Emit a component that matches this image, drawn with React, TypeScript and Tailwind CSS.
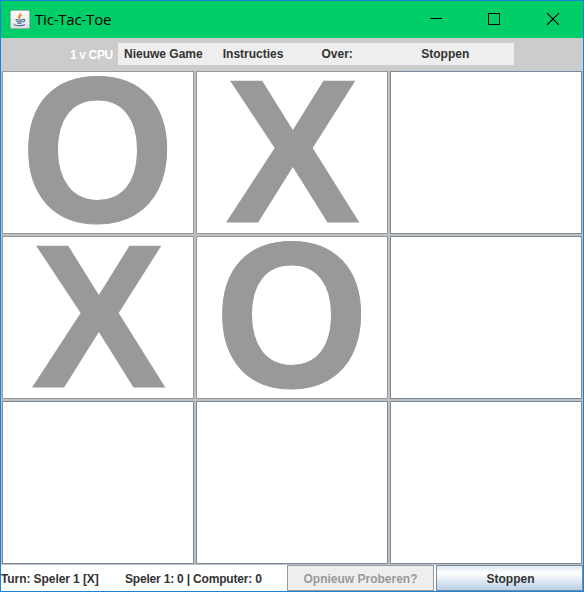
type Mark = "X" | "O" | "";

const board: Mark[] = ["O", "X", "", "X", "O", "", "", "", ""];

function JavaIcon() {
  return (
    <svg width="20" height="19" viewBox="0 0 20 19" className="-mt-px shrink-0">
      <defs>
        <linearGradient id="tile" x1="0" y1="0" x2="0" y2="1">
          <stop offset="0" stopColor="#ffffff" />
          <stop offset="1" stopColor="#dcdfe3" />
        </linearGradient>
      </defs>
      <rect x="0.5" y="0.5" width="19" height="18" rx="1.5" fill="url(#tile)" stroke="#9fb0b0" />
      <path d="M10.4 3c1 1.700-2.700 2.600-1.900 4.200.3.700.9 1 1.100 1.600M11.700 5.200c-1.600.8-2.100 1.500-1.300 2.400" fill="none" stroke="#e88a3a" strokeWidth="1.300" />
      <path d="M5.500 9.500c1.500.7 6 .7 7.500 0M6.300 11.300c1.700.6 4.700.6 6.200 0M7.200 13c1.300.5 3.200.5 4.300 0M13 9.500c2.600-.7 2.200 2-.3 2.500M4.500 14.200c-1.500 1.700 8.500 2 10.500.3" fill="none" stroke="#54799b" strokeWidth="1.200" />
    </svg>
  );
}

function TitleBar() {
  return (
    <header className="flex h-[37px] shrink-0 items-center bg-[#00ce69] pl-[9px]">
      <JavaIcon />
      <h1 className="-mt-[2px] ml-[5px] whitespace-nowrap font-['Open_Sans',sans-serif] text-[15px] leading-[20px] font-normal tracking-[-0.200px] text-black">
        Tic-Tac-Toe
      </h1>
      <svg width="130" height="12" viewBox="0 0 130 12" className="-mt-px ml-auto mr-[24px]" fill="none" stroke="#000" shapeRendering="crispEdges">
        <path d="M1 5.500H13M59.500 .5H70.500V11.500H59.500Z" />
        <path d="M118 0L130 12M130 0L118 12" shapeRendering="auto" strokeWidth="1.100" />
      </svg>
    </header>
  );
}

function MenuBar() {
  return (
    <nav className="flex h-[33px] shrink-0 items-start bg-[#cccccc] pt-[5px] pl-[69px]">
      <span className="w-[48px] whitespace-nowrap pt-[5px] leading-[14px] tracking-[-0.35px] text-white">1 v CPU</span>
      <div className="flex h-[22px] w-[396px] items-start bg-[#eeeeee] pt-1">
        {["Nieuwe Game", "Instructies", "Over:", "Stoppen"].map((label, i) => (
          <button key={label} className={`whitespace-nowrap pl-[6px] text-left leading-[14px] ${i === 2 ? "w-[100px]" : "w-[99px]"}`}>
            {label}
          </button>
        ))}
      </div>
    </nav>
  );
}

function Cell({ mark }: { mark: Mark }) {
  return (
    <button
      className={`flex items-center justify-center border bg-white ${mark ? "border-[#999999]" : "border-[#7a8a99]"}`}
    >
      {mark && (
        <span
          className={`-mt-[3px] block text-[200px] leading-[160px] text-[#999999] [-webkit-text-stroke:1px_#999999] ${mark === "X" ? "ml-px scale-x-[1.012] scale-y-[1.025]" : "scale-x-[0.993] scale-y-[1.035]"}`}
        >
          {mark}
        </span>
      )}
    </button>
  );
}

export default function App() {
  return (
    <div className="flex h-[592px] w-[584px] flex-col overflow-hidden border border-[#1883d7] bg-[#c0c0c0] font-['Liberation_Sans',Arial,sans-serif] text-[12px] font-bold text-[#333333]">
      <TitleBar />
      <MenuBar />
      <main className="grid h-[493px] shrink-0 grid-cols-[192px_192px_192px] grid-rows-[163px_163px_163px] gap-[2px] pl-px">
        {board.map((mark, i) => (
          <Cell key={i} mark={mark} />
        ))}
      </main>
      <footer className="mt-px flex h-[26px] bg-white">
        <span className="flex w-[124px] items-center whitespace-nowrap pt-[2px] tracking-[-0.080px]">Turn: Speler 1 [X]</span>
        <span className="flex w-[162px] items-center whitespace-nowrap pt-[2px] tracking-[-0.190px]">Speler 1: 0 | Computer: 0</span>
        <button className="w-[147px] border border-[#999999] bg-[#eeeeee] pt-[2px] text-[#999999]">Opnieuw Proberen?</button>
        <button className="ml-[2px] w-[147px] border border-[#7a8a99] bg-linear-to-b from-[#dde8f3] via-white via-30% to-[#b8cfe5] pt-[2px] pl-[2px]">
          Stoppen
        </button>
      </footer>
    </div>
  );
}
